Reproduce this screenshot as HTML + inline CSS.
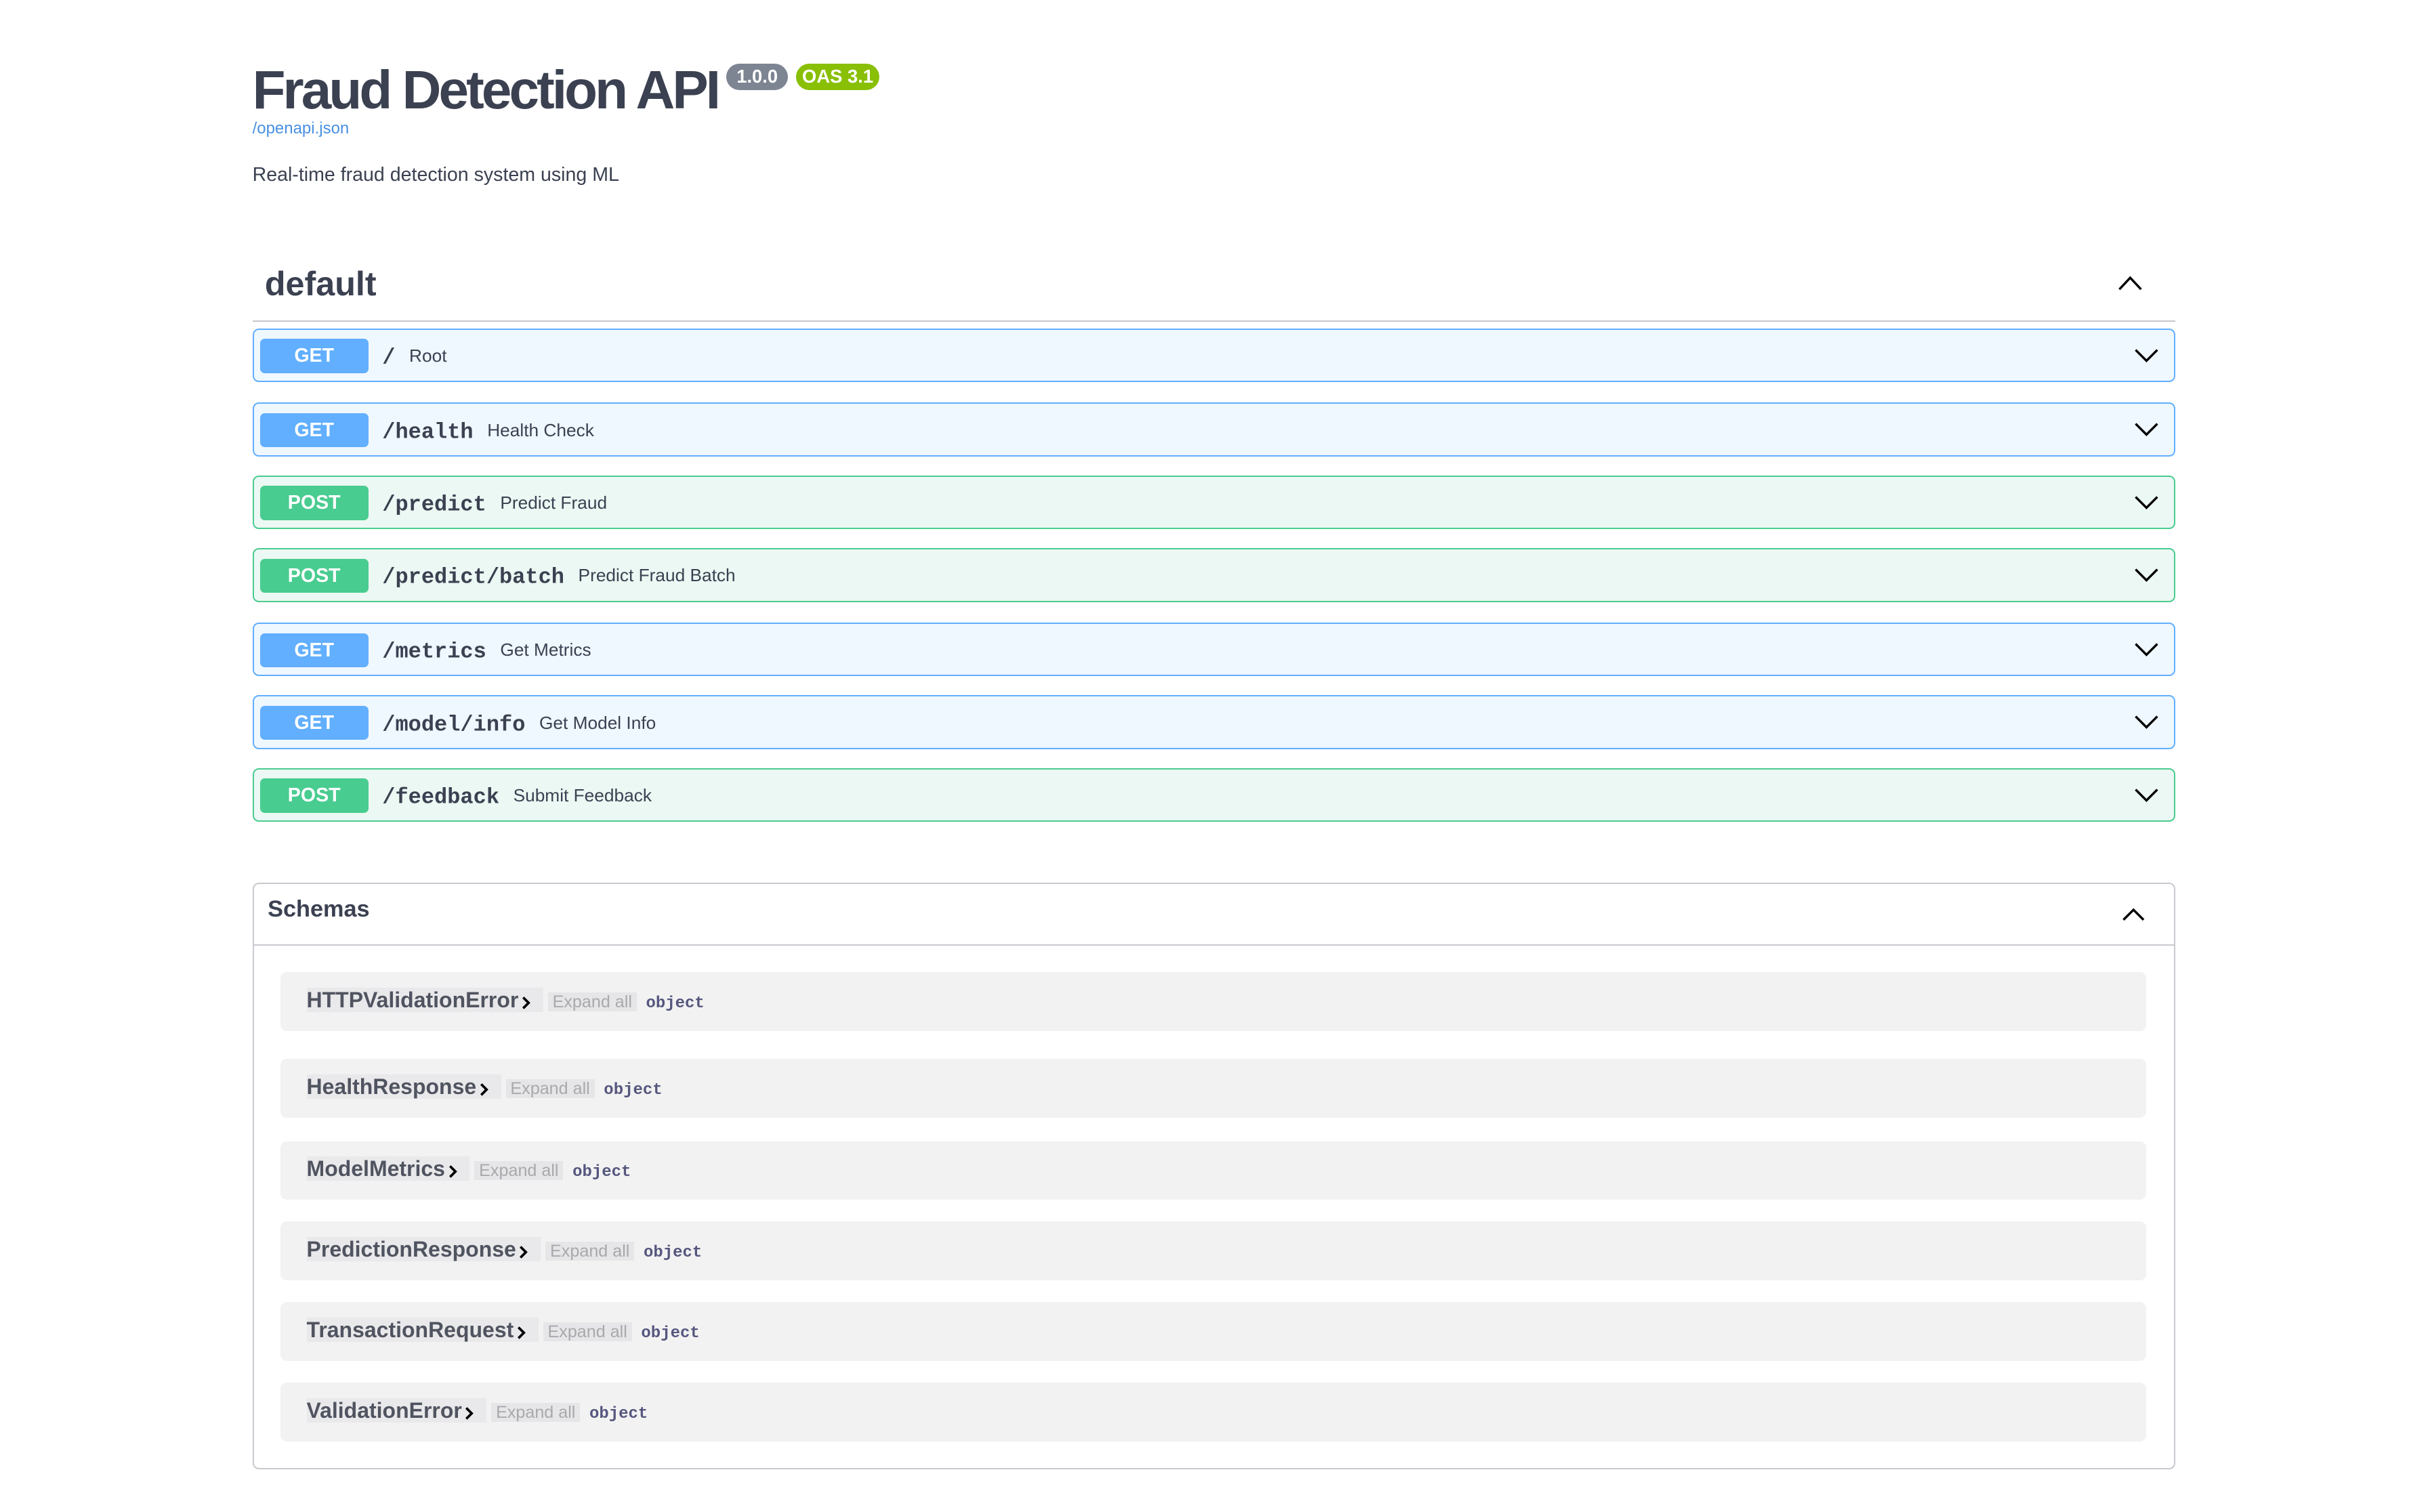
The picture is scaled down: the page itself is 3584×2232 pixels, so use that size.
<!DOCTYPE html>
<html><head><meta charset="utf-8">
<style>
html,body{margin:0;padding:0;background:#fff;}
body{width:1568px;height:976px;zoom:2.2857;position:relative;overflow:hidden;font-family:"Liberation Sans",Arial,sans-serif;color:#3b4151;}
.a{position:absolute;}
.title{left:163px;top:37px;font-size:35px;letter-spacing:-1.7px;font-weight:bold;line-height:42px;white-space:nowrap;}
.badge{top:41px;height:17px;border-radius:9px;color:#fff;font-weight:bold;font-size:12px;line-height:17px;text-align:center;}
.link{left:163px;top:77px;font-size:10.5px;color:#4990e2;}
.desc{left:163px;top:106px;font-size:12.5px;}
.tag{left:171px;top:170px;font-size:22px;font-weight:bold;}
.hr{left:163px;top:207px;width:1242px;height:1px;background:#c5c7cc;}
.op{left:163px;width:1240px;height:33px;border-radius:4px;border:1px solid;}
.get{background:#eff7ff;border-color:#61affe;}
.post{background:#ebf8f3;border-color:#49cc90;}
.m{position:absolute;left:4px;top:6px;width:70px;height:22px;border-radius:3px;color:#fff;font-weight:bold;font-size:12.5px;line-height:22px;text-align:center;}
.get .m{background:#61affe}.post .m{background:#49cc90}
.p{position:absolute;left:83px;top:8px;font-family:"Liberation Mono",monospace;font-weight:bold;font-size:14px;line-height:18px;white-space:nowrap;}
.p span{font-family:"Liberation Sans",Arial,sans-serif;font-weight:normal;font-size:11.5px;margin-left:9px;vertical-align:1px;}
.chev{position:absolute;right:9px;top:11px;}
.sch{left:163px;top:570px;width:1240px;height:377px;border:1px solid #c8cacf;border-radius:4px;}
.sh{position:absolute;left:0;top:0;width:100%;height:39px;border-bottom:1px solid #c8cacf;}
.sh b{position:absolute;left:9px;top:8px;font-size:15px;}
.row{left:181px;width:1205px;height:38px;background:#f2f2f2;border-radius:4px;}
.row .n{position:absolute;left:17px;top:10px;font-size:14px;font-weight:bold;color:#505460;white-space:nowrap;}
.row .nm{background:#e9e9eb;padding-right:4px;}
.row svg{vertical-align:-2px;margin:0 4px 0 2px;}
.row .e{font-size:11px;color:#a9a9ad;font-weight:normal;background:#e6e6e8;padding:0 3px;margin-left:3px;}
.row .o{font-family:"Liberation Mono",monospace;font-size:10.5px;font-weight:bold;color:#55577e;margin-left:6px;}
</style></head><body>
<div class="a title">Fraud Detection API</div>
<div class="a badge" style="left:469px;width:40px;background:#7d8492">1.0.0</div>
<div class="a badge" style="left:514px;width:54px;background:#89bf04">OAS 3.1</div>
<div class="a link">/openapi.json</div>
<div class="a desc">Real-time fraud detection system using ML</div>
<div class="a tag">default</div>
<svg class="a" style="left:1367px;top:176px" width="17" height="13" viewBox="0 0 17 13"><path d="M1.5 11 L8.5 3.5 L15.5 11" fill="none" stroke="#000" stroke-width="1.5"/></svg>
<div class="a hr"></div>

<div class="a op get" style="top:212px"><div class="m">GET</div><div class="p">/<span>Root</span></div><svg class="chev" width="17" height="12" viewBox="0 0 17 12"><path d="M1.5 2 L8.5 9 L15.5 2" fill="none" stroke="#000" stroke-width="1.5"/></svg></div>
<div class="a op get" style="top:260px"><div class="m">GET</div><div class="p">/health<span>Health Check</span></div><svg class="chev" width="17" height="12" viewBox="0 0 17 12"><path d="M1.5 2 L8.5 9 L15.5 2" fill="none" stroke="#000" stroke-width="1.5"/></svg></div>
<div class="a op post" style="top:307px"><div class="m">POST</div><div class="p">/predict<span>Predict Fraud</span></div><svg class="chev" width="17" height="12" viewBox="0 0 17 12"><path d="M1.5 2 L8.5 9 L15.5 2" fill="none" stroke="#000" stroke-width="1.5"/></svg></div>
<div class="a op post" style="top:354px"><div class="m">POST</div><div class="p">/predict/batch<span>Predict Fraud Batch</span></div><svg class="chev" width="17" height="12" viewBox="0 0 17 12"><path d="M1.5 2 L8.5 9 L15.5 2" fill="none" stroke="#000" stroke-width="1.5"/></svg></div>
<div class="a op get" style="top:402px"><div class="m">GET</div><div class="p">/metrics<span>Get Metrics</span></div><svg class="chev" width="17" height="12" viewBox="0 0 17 12"><path d="M1.5 2 L8.5 9 L15.5 2" fill="none" stroke="#000" stroke-width="1.5"/></svg></div>
<div class="a op get" style="top:449px"><div class="m">GET</div><div class="p">/model/info<span>Get Model Info</span></div><svg class="chev" width="17" height="12" viewBox="0 0 17 12"><path d="M1.5 2 L8.5 9 L15.5 2" fill="none" stroke="#000" stroke-width="1.5"/></svg></div>
<div class="a op post" style="top:496px"><div class="m">POST</div><div class="p">/feedback<span>Submit Feedback</span></div><svg class="chev" width="17" height="12" viewBox="0 0 17 12"><path d="M1.5 2 L8.5 9 L15.5 2" fill="none" stroke="#000" stroke-width="1.5"/></svg></div>

<div class="a sch"><div class="sh"><b>Schemas</b><svg style="position:absolute;right:18px;top:13px" width="16" height="12" viewBox="0 0 16 12"><path d="M1.5 10 L8 3.5 L14.5 10" fill="none" stroke="#000" stroke-width="1.5"/></svg></div></div>
<div class="a row" style="top:628px"><div class="n"><span class="nm">HTTPValidationError<svg width="6" height="10" viewBox="0 0 6 10"><path d="M1 1.5 L4.5 5 L1 8.5" fill="none" stroke="#000" stroke-width="1.6"/></svg></span><span class="e">Expand all</span><span class="o">object</span></div></div>
<div class="a row" style="top:684px"><div class="n"><span class="nm">HealthResponse<svg width="6" height="10" viewBox="0 0 6 10"><path d="M1 1.5 L4.5 5 L1 8.5" fill="none" stroke="#000" stroke-width="1.6"/></svg></span><span class="e">Expand all</span><span class="o">object</span></div></div>
<div class="a row" style="top:737px"><div class="n"><span class="nm">ModelMetrics<svg width="6" height="10" viewBox="0 0 6 10"><path d="M1 1.5 L4.5 5 L1 8.5" fill="none" stroke="#000" stroke-width="1.6"/></svg></span><span class="e">Expand all</span><span class="o">object</span></div></div>
<div class="a row" style="top:789px"><div class="n"><span class="nm">PredictionResponse<svg width="6" height="10" viewBox="0 0 6 10"><path d="M1 1.5 L4.5 5 L1 8.5" fill="none" stroke="#000" stroke-width="1.6"/></svg></span><span class="e">Expand all</span><span class="o">object</span></div></div>
<div class="a row" style="top:841px"><div class="n"><span class="nm">TransactionRequest<svg width="6" height="10" viewBox="0 0 6 10"><path d="M1 1.5 L4.5 5 L1 8.5" fill="none" stroke="#000" stroke-width="1.6"/></svg></span><span class="e">Expand all</span><span class="o">object</span></div></div>
<div class="a row" style="top:893px"><div class="n"><span class="nm">ValidationError<svg width="6" height="10" viewBox="0 0 6 10"><path d="M1 1.5 L4.5 5 L1 8.5" fill="none" stroke="#000" stroke-width="1.6"/></svg></span><span class="e">Expand all</span><span class="o">object</span></div></div>
</body></html>
